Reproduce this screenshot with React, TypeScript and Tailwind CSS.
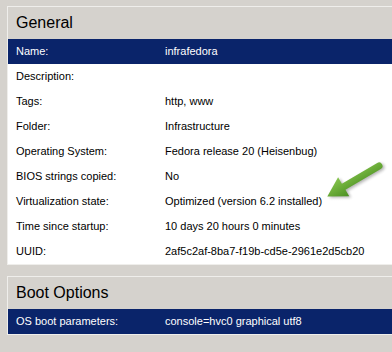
import React from "react";

const general = [
  ["Name:", "infrafedora"],
  ["Description:", ""],
  ["Tags:", "http, www"],
  ["Folder:", "Infrastructure"],
  ["Operating System:", "Fedora release 20 (Heisenbug)"],
  ["BIOS strings copied:", "No"],
  ["Virtualization state:", "Optimized (version 6.2 installed)"],
  ["Time since startup:", "10 days 20 hours 0 minutes"],
  ["UUID:", "2af5c2af-8ba7-f19b-cd5e-2961e2d5cb20"],
];

const boot = [["OS boot parameters:", "console=hvc0 graphical utf8"]];

const Row = ({ label, value, selected }: { label: string; value: string; selected?: boolean }) => (
  <div
    className={`flex items-center h-[25px] pl-2 text-[11px] ${
      selected ? "bg-[#0a246a] text-white" : "bg-white text-black"
    }`}
  >
    <div className="w-[149px] shrink-0">{label}</div>
    <div className="whitespace-nowrap">{value}</div>
  </div>
);

const Section = ({ title, rows }: { title: string; rows: string[][] }) => (
  <div className="border-t border-l border-b border-[#efeeeb]">
    <div className="h-[32px] flex items-center pl-2 text-[16px] text-black">{title}</div>
    {rows.map(([l, v], i) => (
      <Row key={l} label={l} value={v} selected={i === 0} />
    ))}
  </div>
);

// green callout arrow pointing at the virtualization state
const arrowPath = "M0,-3.5 L41,-3.5 L41,-11 L60,0 L41,11 L41,3.5 L0,3.5 A3.5,3.5 0 0 1 0,-3.5 Z";

const Arrow = () => (
  <svg className="absolute left-0 top-0 pointer-events-none" width="392" height="352">
    <defs>
      <linearGradient id="g" gradientUnits="userSpaceOnUse" x1="0" y1="-11" x2="0" y2="11">
        <stop offset="0" stopColor="#4a8f22" />
        <stop offset="1" stopColor="#86c44c" />
      </linearGradient>
      <filter id="s" x="-30%" y="-30%" width="160%" height="160%">
        <feGaussianBlur stdDeviation="1.5" />
      </filter>
    </defs>
    <g transform="translate(379 166) rotate(149.5)">
      <path d={arrowPath} fill="#000" opacity="0.3" filter="url(#s)" transform="translate(-1 -2)" />
      <path d={arrowPath} fill="url(#g)" />
    </g>
  </svg>
);

export default function App() {
  return (
    <div
      className="relative w-[392px] h-[352px] overflow-hidden bg-[#d5d2cd] pl-[7px] pt-[6px]"
      style={{ fontFamily: '"Liberation Sans", Arial, sans-serif' }}
    >
      <div className="flex flex-col gap-[11px]">
        <Section title="General" rows={general} />
        <Section title="Boot Options" rows={boot} />
      </div>
      <Arrow />
    </div>
  );
}
